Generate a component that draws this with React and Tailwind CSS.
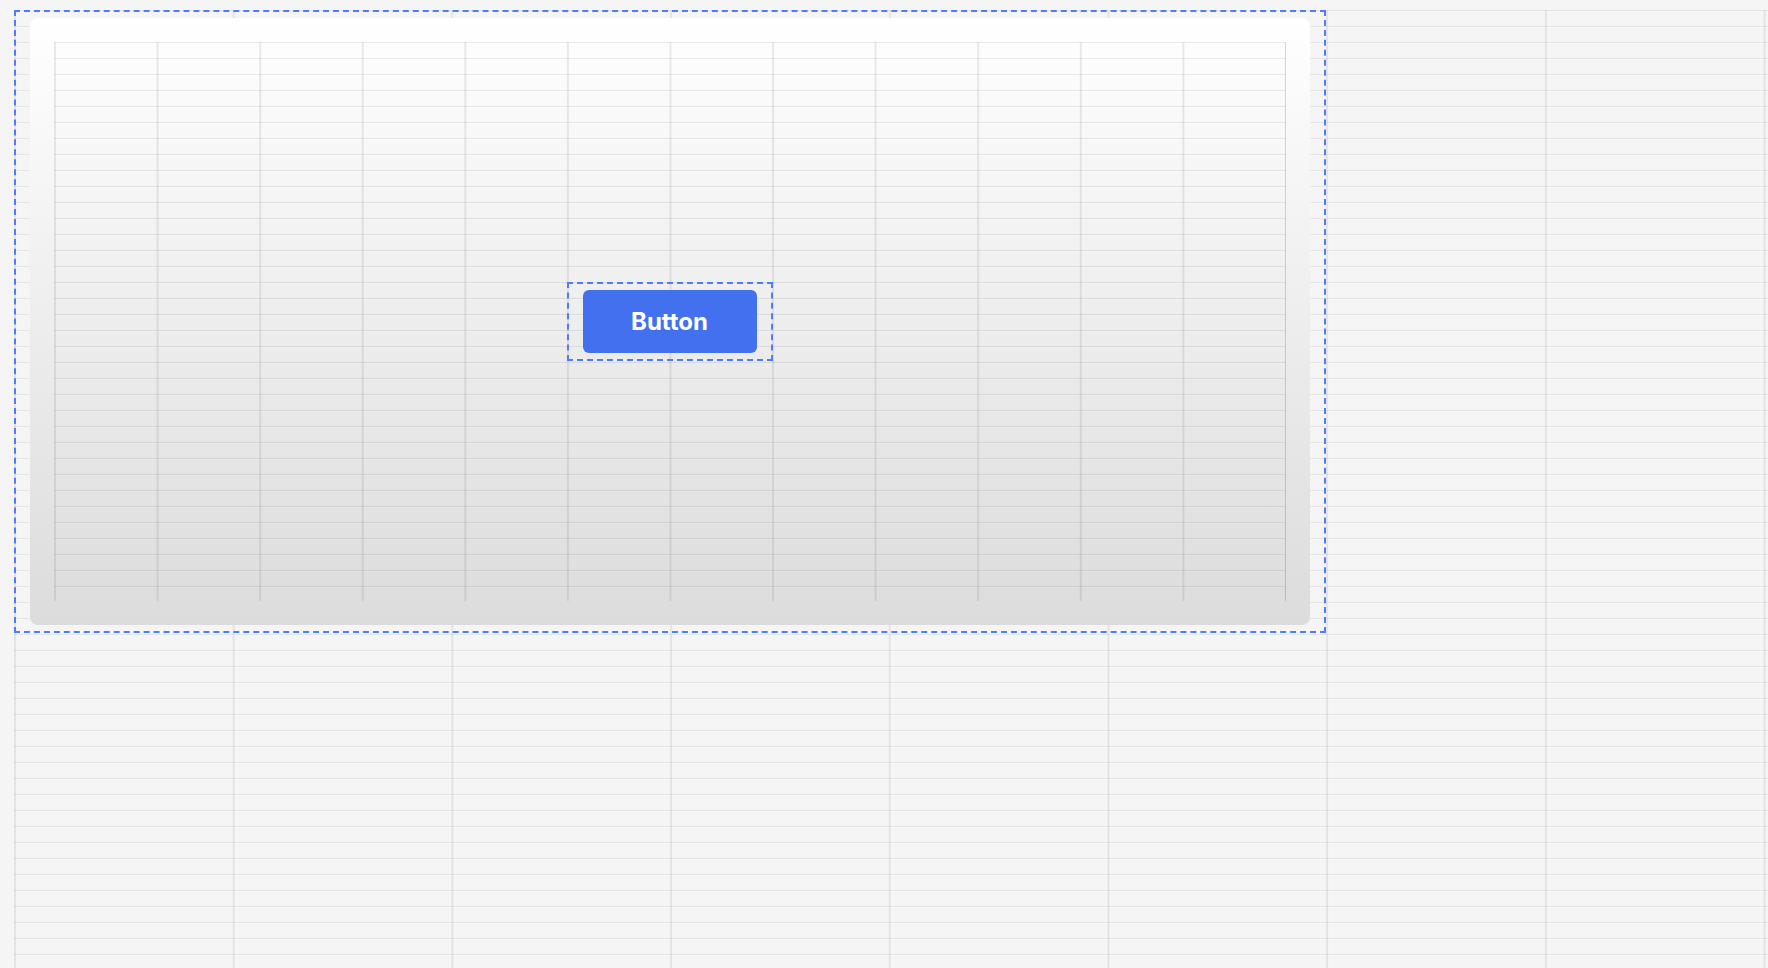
export default function App() {
  return (
    <div className="min-h-screen bg-[#f5f5f5] pl-[14px] pt-[10px] font-['Inter',sans-serif]">
      {/* page baseline + column overlay */}
      <div className="h-[958px] [background-image:linear-gradient(to_right,rgba(0,0,0,0.07)_1.5px,transparent_1.5px),linear-gradient(to_bottom,rgba(0,0,0,0.065)_1.5px,transparent_1.5px)] [background-size:218.7px_100%,100%_16px]">
        <div className="w-[1312px] border-2 border-dashed border-[#4d7ef7] px-[14px] py-[6px]">
          <div className="h-[607px] rounded-lg bg-linear-to-b from-white to-[#dcdcdc] p-6">
            <div className="flex h-full items-center justify-center border-r border-black/[0.08] [background-image:linear-gradient(to_right,rgba(0,0,0,0.08)_1.5px,transparent_1.5px),linear-gradient(to_bottom,rgba(0,0,0,0.075)_1.5px,transparent_1.5px)] [background-size:calc(100%/12)_100%,100%_16px]">
              <div className="border-2 border-dashed border-[#4d7ef7] px-[14px] py-[6px]">
                <button className="flex h-[63px] w-[174px] items-center justify-center rounded-md bg-[#4270ef] text-[24px] font-bold text-white">
                  Button
                </button>
              </div>
            </div>
          </div>
        </div>
      </div>
    </div>
  );
}
